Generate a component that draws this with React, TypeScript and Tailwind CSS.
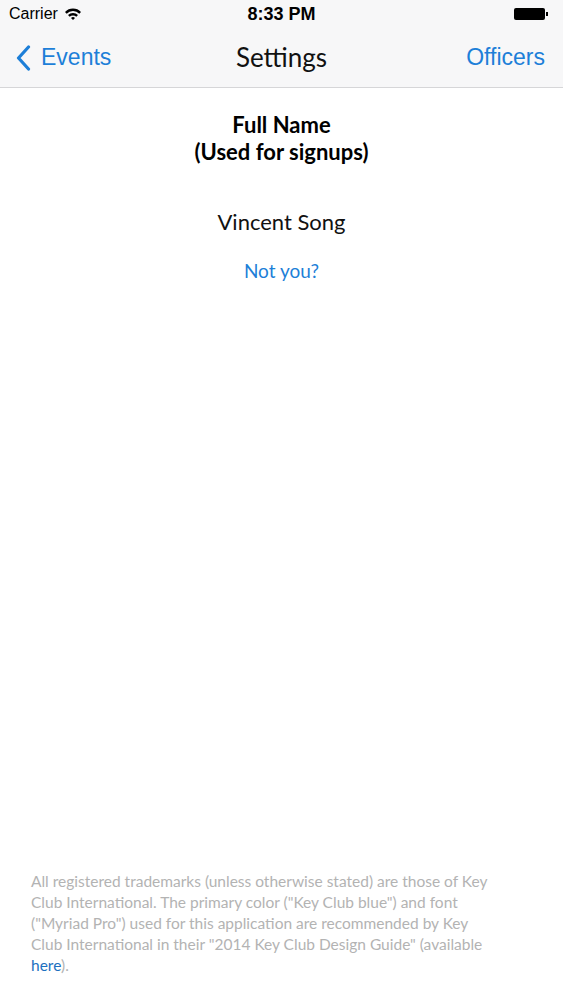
export default function App() {
  return (
    <div className="flex h-[1000px] w-[563px] flex-col bg-white font-['Lato',sans-serif]">
      <div className="bg-[#f7f7f8] border-b border-[#d6d6d8]">
        <div className="relative flex h-[28px] items-center justify-between px-[9px] font-['Liberation_Sans',sans-serif] text-[16px] text-black">
          <div className="flex items-center gap-[6px]">
            <span>Carrier</span>
            <svg width="18" height="14" viewBox="0 0 18 14">
              <path d="M1 5 A11 11 0 0 1 17 5 L15.3 6.8 A8.5 8.5 0 0 0 2.7 6.8 Z" fill="#000" />
              <path d="M4 8 A7 7 0 0 1 14 8 L12.3 9.8 A4.6 4.6 0 0 0 5.7 9.8 Z" fill="#000" />
              <path d="M7 11 A3 3 0 0 1 11 11 L9 13 Z" fill="#000" />
            </svg>
          </div>
          <span className="absolute left-1/2 -translate-x-1/2 text-[18px] font-bold">8:33 PM</span>
          <div className="flex items-center pr-[6px]">
            <div className="h-[12px] w-[31px] rounded-[2px] bg-black" />
            <div className="ml-[1px] h-[4px] w-[2px] bg-black" />
          </div>
        </div>
        <div className="relative flex h-[59px] items-center justify-between pl-[16px] pr-[18px]">
          <div className="flex items-center gap-[10px] font-['Liberation_Sans',sans-serif] text-[23px] text-[#1d7fd8]">
            <svg width="15" height="26" viewBox="0 0 15 26">
              <path d="M12.5 2 L2.5 13 L12.5 24" fill="none" stroke="#1d7fd8" strokeWidth="3.2" strokeLinecap="round" strokeLinejoin="round" />
            </svg>
            <span>Events</span>
          </div>
          <span className="absolute left-1/2 -translate-x-1/2 text-[26px] text-[#111]">Settings</span>
          <span className="font-['Liberation_Sans',sans-serif] text-[23px] text-[#1d7fd8]">Officers</span>
        </div>
      </div>

      <div className="flex flex-col items-center pt-[23px] text-center">
        <div className="text-[22px] font-bold leading-[27px] text-black">
          Full Name
          <br />
          (Used for signups)
        </div>
        <div className="mt-[40px] text-[22px] text-[#111]">Vincent Song</div>
        <div className="mt-[19px] text-[19px] text-[#1d7fd8]">Not you?</div>
      </div>

      <div className="flex-1" />

      <div className="flex flex-col whitespace-nowrap pl-[31px] pb-[24px] text-[15.5px] leading-[21px] text-[#b3b3b3]">
        <span>All registered trademarks (unless otherwise stated) are those of Key</span>
        <span>Club International. The primary color ("Key Club blue") and font</span>
        <span>("Myriad Pro") used for this application are recommended by Key</span>
        <span>Club International in their "2014 Key Club Design Guide" (available</span>
        <span>
          <span className="text-[#1d70c0]">here</span>).
        </span>
      </div>
    </div>
  );
}
